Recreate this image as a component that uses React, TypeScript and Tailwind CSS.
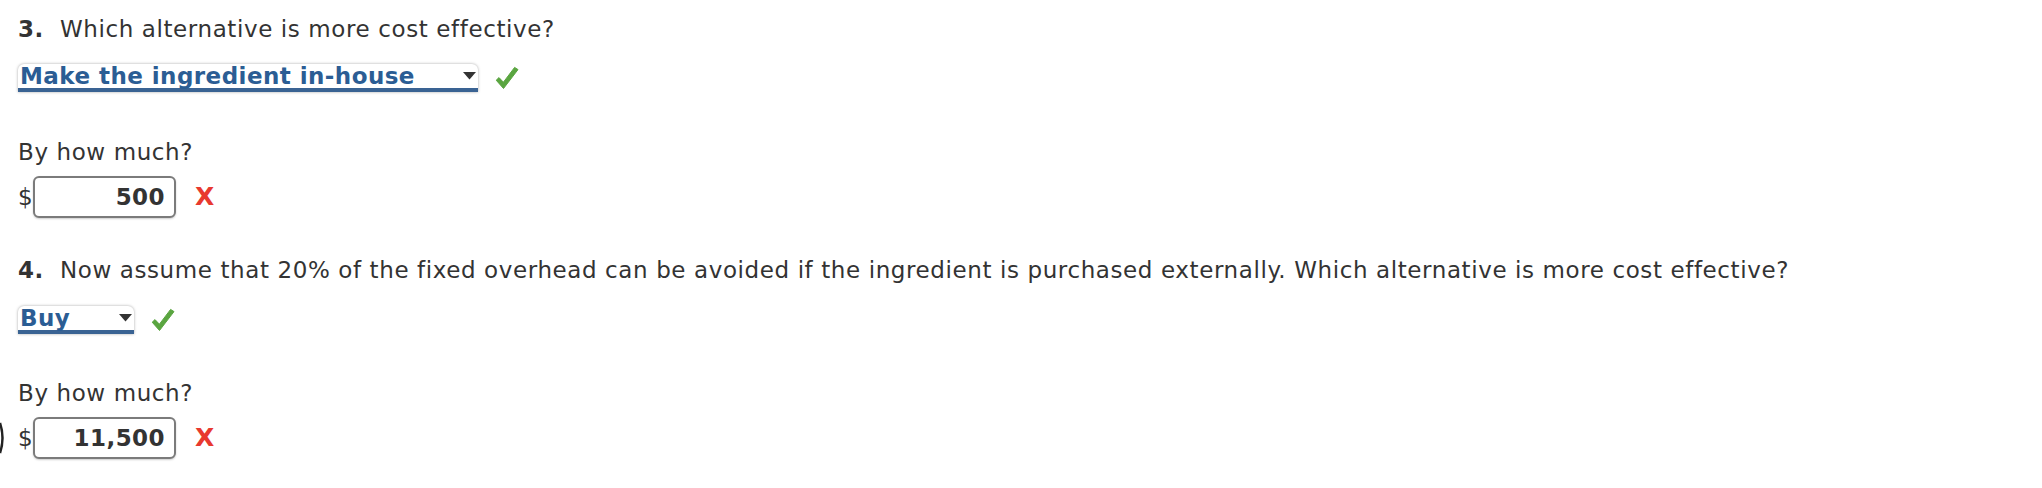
const font = { fontFamily: '"DejaVu Sans", Verdana, sans-serif' };

function Check() {
  return (
    <svg width="24" height="24" viewBox="0 0 24 24" className="ml-[17px]">
      <path
        d="M8.5 22.5 L1.2 14.2 L4 11.6 L8.4 16.2 L19.6 1.4 L23 3.6 Z"
        fill="#5aa540"
        stroke="#5aa540"
        strokeWidth="1"
        strokeLinejoin="round"
      />
    </svg>
  );
}

function Dropdown({ label, width }: { label: string; width: string }) {
  return (
    <div className="flex items-center">
      <div
        className={`${width} h-[28px] flex items-center justify-between rounded-t-[6px] bg-white border-b-[4px] border-[#3a6393] shadow-[0_0_3px_rgba(0,0,0,0.35)] pl-[2px] pr-[2px]`}
      >
        <span className="font-bold text-[#2b5d94] text-[23px] leading-[24px] tracking-[0.45px]">{label}</span>
        <svg width="13" height="8" viewBox="0 0 13 8" className="mb-[1px]">
          <polygon points="0,0 13,0 6.5,7.5" fill="#333" />
        </svg>
      </div>
      <Check />
    </div>
  );
}

function Amount({ value, arc }: { value: string; arc?: boolean }) {
  return (
    <div className="flex items-center mt-[10px]">
      {arc && (
        <svg width="4" height="32" viewBox="0 0 4 32" className="-ml-[18px] mr-[14px]">
          <path d="M0 1 Q5 16 0 31" fill="none" stroke="#222" strokeWidth="2.5" />
        </svg>
      )}
      <span className="text-[23px] leading-[28px] text-[#333] w-[15px]">$</span>
      <div className="w-[143px] h-[42px] flex items-center justify-end pr-[9px] rounded-[6px] border-2 border-[#7b7b7b] bg-white shadow-[0_1px_2px_rgba(0,0,0,0.2)]">
        <span className="font-bold text-[23px] leading-[28px] tracking-[0.45px] text-[#333]">{value}</span>
      </div>
      <span className="ml-[19px] font-bold text-[25px] leading-[28px] text-[#e8392f]">X</span>
    </div>
  );
}

export default function App() {
  return (
    <div className="w-[2042px] h-[488px] bg-white pl-[18px] pt-[15px] text-[#333]" style={font}>
      <p className="text-[23px] leading-[28px] tracking-[0.6px]">
        <span className="font-bold mr-[16px]">3.</span>Which alternative is more cost effective?
      </p>
      <div className="mt-[21px]">
        <Dropdown label="Make the ingredient in-house" width="w-[460px]" />
      </div>
      <p className="mt-[46px] text-[23px] leading-[28px] tracking-[0.6px]">By how much?</p>
      <Amount value="500" />
      <p className="mt-[38px] text-[23px] leading-[28px] tracking-[0.6px]">
        <span className="font-bold mr-[16px]">4.</span>Now assume that 20% of the fixed overhead can be avoided if the
        ingredient is purchased externally. Which alternative is more cost effective?
      </p>
      <div className="mt-[22px]">
        <Dropdown label="Buy" width="w-[116px]" />
      </div>
      <p className="mt-[45px] text-[23px] leading-[28px] tracking-[0.6px]">By how much?</p>
      <Amount value="11,500" arc />
    </div>
  );
}
